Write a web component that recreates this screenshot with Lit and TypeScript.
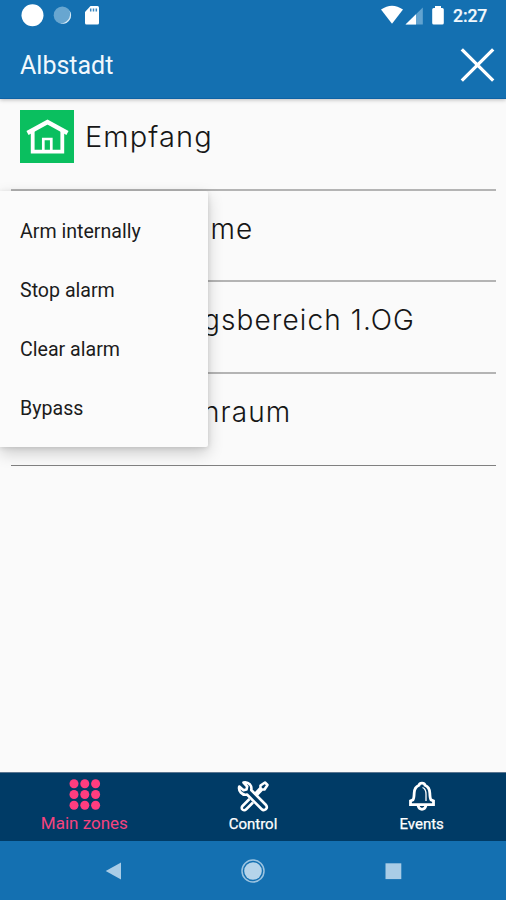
import { LitElement, html, css, svg } from "lit";
import { customElement, property } from "lit/decorators.js";
import { classMap } from "lit/directives/class-map.js";

const ZONES = [
  { name: "Empfang", cls: "first" },
  { name: "me", cls: "second" },
  { name: "gsbereich 1.OG", cls: "third" },
  { name: "nraum", cls: "fourth" },
];

const ACTIONS = ["Arm internally", "Stop alarm", "Clear alarm", "Bypass"];

@customElement("status-bar")
class StatusBar extends LitElement {
  static styles = css`
    :host { display: flex; height: 32px; justify-content: space-between; }
    svg { display: block; }
    .right { display: flex; }
    .time {
      width: 53px; font: 500 17.6px/32px Roboto, sans-serif;
      color: #f2f8fc; letter-spacing: -0.1px; -webkit-text-stroke: 0.2px #f2f8fc;
    }
  `;
  render() {
    return html`
      <svg width="110" height="32" viewBox="0 0 110 32">
        <circle cx="32.5" cy="15.2" r="11" fill="#fff" />
        <circle cx="62.3" cy="15.2" r="8.6" fill="#68a6d0" />
        <path d="M69.5 10.5A8.4 8.4 0 0 1 60 23.3A9.5 9.5 0 0 0 69.5 10.5Z" fill="#d5e9f5" />
        <path d="M90.5 6H97.5Q99 6 99 7.5V23Q99 24.6 97.5 24.6H86.5Q85 24.6 85 23V12Z" fill="#fff" />
        <path d="M90.7 8.5v3M93.5 8.5v3M96.3 8.5v3" stroke="#3b87bf" stroke-width="1.5" />
      </svg>
      <div class="right">
        <svg width="72" height="32" viewBox="381 0 72 32">
          <path d="M381 9.5Q392 1.8 403 9.5L392 23.8Z" fill="#fff" />
          <path d="M422.8 7.5V24.6H405.5Z" fill="#62a3d0" />
          <path d="M416 14.3V24.6H405.5Z" fill="#fff" />
          <path d="M435 8V6h6v2h1.3q1.5 0 1.5 1.5V23q0 1.6-1.5 1.6h-8.600q-1.500 0-1.500-1.600V9.500q0-1.500 1.500-1.500Z" fill="#fff" />
        </svg>
        <span class="time">2:27</span>
      </div>
    `;
  }
}

@customElement("zone-list")
class ZoneList extends LitElement {
  static styles = css`
    :host { display: block; padding: 0 10px 0 11px; }
    .row {
      box-sizing: border-box; height: 91.8px; display: flex; align-items: flex-start;
      border-bottom: 2px solid #b4b4b4; padding: 12px 0 0 9px;
    }
    .first { height: 91.5px; padding-top: 11px; }
    .row:last-child { border-bottom: 1px solid #808080; }
    .icon { width: 54px; height: 53px; margin-right: 11px; background: #0abf5f; flex: none; }
    .icon svg { display: block; }
    .name {
      font: 300 28px/53px Inter, "Open Sans", sans-serif; color: #161616;
      white-space: pre; letter-spacing: 1.1px;
    }
    .first .name { letter-spacing: 1.1px; font-size: 29px; line-height: 54px; }
    .second .name { padding-left: 190.5px; }
    .third .name { padding-left: 183px; }
    .fourth .name { padding-left: 183px; }
  `;
  render() {
    return ZONES.map((z, i) => html`
      <div class="row ${z.cls}">
        ${i === 0 ? html`<div class="icon">
          <svg width="54" height="53" viewBox="0 0 54 53" fill="none" stroke="#fff">
            <path d="M7.500 23L27.500 12L47.500 23" stroke-width="4.300" />
            <path d="M12.700 21V41.600H42.300V21" stroke-width="3.800" />
            <path d="M23.300 41V29H31.300V41" stroke-width="2.700" />
          </svg></div>` : null}
        <span class="name">${z.name}</span>
      </div>`);
  }
}

@customElement("action-menu")
class ActionMenu extends LitElement {
  static styles = css`
    :host {
      display: block; box-sizing: border-box; width: 207.5px; height: 256px; padding-top: 11px;
      background: #fbfbfb; border-radius: 0 2px 2px 0;
      box-shadow: 0 6px 16px rgba(0,0,0,0.19), 0 1px 5px rgba(0,0,0,0.12);
    }
    .item {
      height: 59.15px; padding-left: 20px; font: 400 19.6px/59px Roboto, sans-serif;
      color: #1c1c1c;
    }
  `;
  render() {
    return ACTIONS.map((a) => html`<div class="item">${a}</div>`);
  }
}

const dots = [6.7, 17.5, 28.2].flatMap((y) => [10, 20.8, 31.6].map((x) => svg`<circle cx=${x} cy=${y} r="4.500" />`));

const ICONS = {
  zones: html`<svg width="40" height="36" viewBox="0 0 40 36" fill="#ff3d7f">${dots}</svg>`,
  control: html`<svg width="40" height="36" viewBox="0 0 40 36" fill="none" stroke="#fff" stroke-width="2.600" stroke-linejoin="round">
    <path d="M16.500 22L10 28.500Q7.500 31 9.800 32.800Q11.500 34 13.500 32L20 25.500" />
    <path d="M22 16.800L27.500 11V8.500L32 5.500L34.500 8L31.500 12.500H29L23.800 18.200" />
    <path d="M10.500 5.500Q14 4.500 17 7.500Q19 9.800 18.200 13L33 28Q34.800 30.500 32.800 32.300Q30.500 34 28.500 32L14 17.500Q10.500 18.500 7.700 15.500Q5.300 12.500 6.300 9.500L10.500 13.200L13.500 12.500L14.200 9.500Z" />
  </svg>`,
  events: html`<svg width="40" height="36" viewBox="0 0 40 36" fill="none" stroke="#fff" stroke-width="2.800" stroke-linejoin="miter">
    <path d="M17 8.300Q17.500 6.200 20 6.200Q22.500 6.200 23 8.300Q27.600 10.200 27.800 16Q28 21.500 29 22.800L31.500 24V27.600H8.500V24L11 22.800Q12 21.500 12.200 16Q12.400 10.200 17 8.300Z" />
    <path d="M16 28.500Q17 32.300 20 32.300Q23 32.300 24 28.500" />
    <path d="M20.500 10.500Q24 12 24 17V24" stroke-width="1.300" />
  </svg>`,
};

@customElement("tab-item")
class TabItem extends LitElement {
  @property() label = "";
  @property() icon: keyof typeof ICONS = "zones";
  @property({ type: Boolean }) active = false;
  static styles = css`
    :host { flex: 1; display: block; }
    .tab { display: flex; flex-direction: column; align-items: center; padding-top: 4px; color: #fff; }
    svg { display: block; }
    .label { font: 400 15px/22px Roboto, sans-serif; white-space: nowrap; -webkit-text-stroke: 0.25px currentColor; }
    .active { color: #f5437f; }
    .active .label { font-size: 17px; line-height: 20px; -webkit-text-stroke: 0; }
  `;
  render() {
    return html`<div class=${classMap({ tab: true, active: this.active })}>
      ${ICONS[this.icon]}<span class="label">${this.label}</span></div>`;
  }
}

@customElement("app-root")
class AppRoot extends LitElement {
  static styles = css`
    :host {
      position: relative; display: flex; flex-direction: column; width: 506px; height: 900px;
      background: #fafafa; overflow: hidden; font-family: Roboto, sans-serif;
    }
    .header {
      height: 99px; flex: none; background: #1470b1; box-sizing: border-box;
      border-bottom: 1px solid #0d62a5; box-shadow: 0 1px 4px rgba(0,0,0,0.25);
    }
    .title { display: flex; justify-content: space-between; align-items: center; height: 66px; padding: 0 11px 0 20px; }
    .title h1 { margin: 0; padding-top: 2px; font: 400 25px/32px Roboto, sans-serif; color: #f1f8fd; }
    .main { flex: 1; }
    .menu { position: absolute; left: 0; top: 191px; }
    .tabs { height: 69px; flex: none; display: flex; background: #003b66; box-sizing: border-box; border-top: 1px solid #5a7590; }
    .system { height: 59px; flex: none; background: #1470b1; display: flex; align-items: center; justify-content: center; }
  `;
  render() {
    return html`
      <div class="header">
        <status-bar></status-bar>
        <div class="title">
          <h1>Albstadt</h1>
          <svg width="35" height="35" viewBox="0 0 35 35" stroke="#fff" stroke-width="3.300"><path d="M1.800 1.300L33.200 32.700M33.200 1.300L1.800 32.700" /></svg>
        </div>
      </div>
      <div class="main"><zone-list></zone-list></div>
      <div class="tabs">
        <tab-item icon="zones" label="Main zones" active></tab-item>
        <tab-item icon="control" label="Control"></tab-item>
        <tab-item icon="events" label="Events"></tab-item>
      </div>
      <div class="system">
        <svg width="506" height="59" viewBox="0 0 506 59" fill="#a9cce6">
          <path d="M105.700 30L121 21.500V38.500Z" />
          <circle cx="253" cy="30" r="8.800" fill="#b5d4ea" />
          <circle cx="253" cy="30" r="11" fill="none" stroke="#9bc3e0" stroke-width="1.500" />
          <rect x="385.500" y="22.300" width="15.800" height="15.800" />
        </svg>
      </div>
      <action-menu class="menu"></action-menu>
    `;
  }
}
